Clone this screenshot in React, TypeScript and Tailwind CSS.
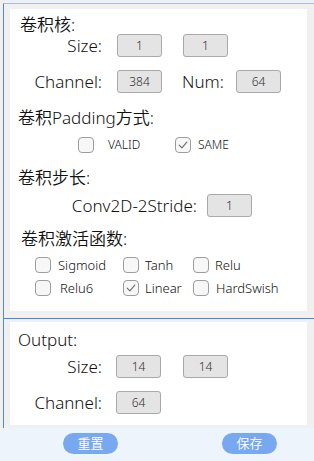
const font = "font-['Noto_Sans','Noto_Sans_CJK_SC',sans-serif] font-[350]";

function ValueBox({ value, className = "" }: { value: string; className?: string }) {
  return (
    <div
      className={`w-[45px] h-[23px] flex items-center justify-center bg-[#e4e4e4] border border-[#a9a9a9] rounded-[3px] text-[12px] text-[#333] ${className}`}
    >
      {value}
    </div>
  );
}

function Check({ checked = false }: { checked?: boolean }) {
  return (
    <div className="w-4 h-4 shrink-0 rounded-[4px] border border-[#9d9d9d] bg-[#f7f7f7] flex items-center justify-center">
      {checked && (
        <svg width="12" height="12" viewBox="0 0 12 12" fill="none">
          <path d="M2.2 6.2 L4.9 8.8 L9.8 3.2" stroke="#6b6b6b" strokeWidth="1.1" strokeLinecap="round" strokeLinejoin="round" />
        </svg>
      )}
    </div>
  );
}

function Option({ label, checked, gap, width }: { label: string; checked?: boolean; gap: string; width: string }) {
  return (
    <div className={`flex items-center ${width}`}>
      <Check checked={checked} />
      <span className={`${gap} text-[13px] leading-4 text-[#111]`}>{label}</span>
    </div>
  );
}

function Heading({ text, className = "" }: { text: string; className?: string }) {
  return <div className={`h-5 leading-5 text-[17px] text-[#111] ${className}`}>{text}</div>;
}

export default function App() {
  return (
    <div className={`w-[314px] h-[461px] bg-[#f0f0f0] pt-[3px] flex flex-col ${font}`}>
      <div className="ml-[3px] h-[425px] border-l border-[#5189e0] border-t border-t-[#a8c0e8] flex flex-col">
        {/* 卷积参数 */}
        <div className="pl-[6px] pt-[5px] pr-[6px]">
          <div className="w-[297px] h-[302px] bg-white pt-[6px] flex flex-col">
            <Heading text="卷积核:" className="ml-[10px] h-[19px] leading-[19px]" />
            <div className="flex items-center h-[23px] text-[17px] text-[#111]">
              <div className="w-[92px] text-right">Size:</div>
              <ValueBox value="1" className="ml-[15px]" />
              <ValueBox value="1" className="ml-[21px]" />
            </div>
            <div className="flex items-center h-[23px] mt-[13px] text-[17px] text-[#111]">
              <div className="w-[92px] text-right">Channel:</div>
              <ValueBox value="384" className="ml-[15px]" />
              <div className="ml-[20px] w-[54px]">Num:</div>
              <ValueBox value="64" />
            </div>
            <Heading text="卷积Padding方式:" className="ml-[8px] mt-[15px]" />
            <div className="flex items-center h-4 mt-[9px] pl-[68px]">
              <div className="flex items-center w-[97px]">
                <Check />
                <span className="ml-[14px] text-[12px] text-[#111]">VALID</span>
              </div>
              <div className="flex items-center">
                <Check checked />
                <span className="ml-[7px] text-[12px] text-[#111]">SAME</span>
              </div>
            </div>
            <Heading text="卷积步长:" className="ml-[8px] mt-[15px]" />
            <div className="flex items-center h-[23px] mt-[6px] text-[17px] text-[#111]">
              <div className="w-[187px] text-right">Conv2D-2Stride:</div>
              <ValueBox value="1" className="ml-[10px]" />
            </div>
            <Heading text="卷积激活函数:" className="ml-[11px] mt-[12px]" />
            <div className="flex items-center h-4 mt-[8px] pl-[25px]">
              <Option label="Sigmoid" gap="ml-[7px]" width="w-[88px]" />
              <Option label="Tanh" gap="ml-[6px]" width="w-[70px]" />
              <Option label="Relu" gap="ml-[6px]" width="" />
            </div>
            <div className="flex items-center h-4 mt-[7px] pl-[25px]">
              <Option label="Relu6" gap="ml-[9px]" width="w-[88px]" />
              <Option label="Linear" checked gap="ml-[6px]" width="w-[70px]" />
              <Option label="HardSwish" gap="ml-[7px]" width="" />
            </div>
          </div>
        </div>
        <div className="mt-[7px] border-t border-[#3f86ee]" />
        {/* Output */}
        <div className="pl-[6px] pt-[3px] pr-[6px]">
          <div className="w-[297px] h-[103px] bg-white pt-[8px] flex flex-col">
            <Heading text="Output:" className="ml-[8px]" />
            <div className="flex items-center h-[23px] mt-[5px] text-[17px] text-[#111]">
              <div className="w-[92px] text-right">Size:</div>
              <ValueBox value="14" className="ml-[14px]" />
              <ValueBox value="14" className="ml-[22px]" />
            </div>
            <div className="flex items-center h-[23px] mt-[13px] text-[17px] text-[#111]">
              <div className="w-[92px] text-right">Channel:</div>
              <ValueBox value="64" className="ml-[14px]" />
            </div>
          </div>
        </div>
      </div>
      <div className="flex-1 bg-[#eef4fc] flex items-start pt-[5px]">
        <button className="ml-[63px] w-[55px] h-[21px] rounded-full bg-[#78a9f0] text-white text-[13px] leading-[21px]">
          重置
        </button>
        <button className="ml-[104px] w-[55px] h-[21px] rounded-full bg-[#78a9f0] text-white text-[13px] leading-[21px]">
          保存
        </button>
      </div>
    </div>
  );
}
